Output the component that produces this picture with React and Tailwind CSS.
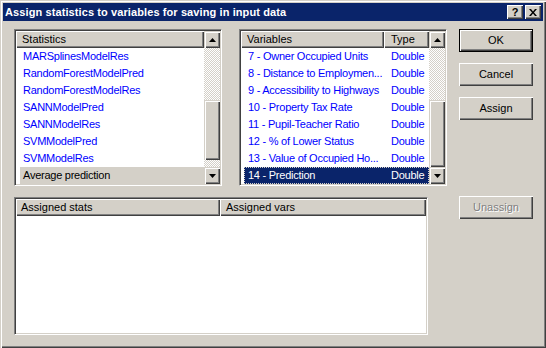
import React from "react";

const font = { fontFamily: '"Liberation Sans", Arial, sans-serif' };

function Arrow({ up }) {
  return (
    <svg width="7" height="4" viewBox="0 0 7 4" className="block">
      {up ? <polygon points="3.5,0 7,4 0,4" fill="#000" /> : <polygon points="0,0 7,0 3.5,4" fill="#000" />}
    </svg>
  );
}

function SBtn({ up }) {
  return (
    <div className="h-[17px] w-[16px] bg-[#d4d0c8] flex items-center justify-center shadow-[inset_1px_1px_#d4d0c8,inset_2px_2px_#fff,inset_-1px_-1px_#404040,inset_-2px_-2px_#808080]">
      <Arrow up={up} />
    </div>
  );
}

function Track({ h }) {
  return (
    <div
      className="w-[16px] bg-[repeating-conic-gradient(#d4d0c8_0_25%,#ffffff_0_50%)] bg-[length:2px_2px]"
      style={{ height: h }}
    />
  );
}

function Thumb({ h }) {
  return (
    <div
      className="w-[16px] bg-[#d4d0c8] shadow-[inset_1px_1px_#d4d0c8,inset_2px_2px_#fff,inset_-1px_-1px_#404040,inset_-2px_-2px_#808080]"
      style={{ height: h }}
    />
  );
}

function Header({ children, className = "" }) {
  return (
    <div className={"h-[17px] bg-[#d4d0c8] flex items-center text-[11px] text-black shadow-[inset_1px_1px_#fff,inset_-1px_-1px_#404040,inset_-2px_-2px_#808080] " + className}>
      {children}
    </div>
  );
}

function Sunken({ className = "", children }) {
  return (
    <div className={"border border-t-[#808080] border-l-[#808080] border-r-white border-b-white p-[1px] bg-white shadow-[inset_1px_1px_#404040,inset_-1px_-1px_#d4d0c8] " + className}>
      {children}
    </div>
  );
}

function Button({ children, def, disabled, className = "" }) {
  return (
    <div
      className={
        "w-[74px] h-[23px] bg-[#d4d0c8] flex items-center justify-center text-[11px] " +
        (def
          ? "border border-black shadow-[inset_1px_1px_#fff,inset_-1px_-1px_#404040,inset_-2px_-2px_#808080] "
          : "shadow-[inset_1px_1px_#fff,inset_-1px_-1px_#404040,inset_-2px_-2px_#808080] ") +
        (disabled ? "text-[#808080] [text-shadow:1px_1px_#fff] " : "text-black ") +
        className
      }
    >
      {children}
    </div>
  );
}

const stats = [
  "MARSplinesModelRes",
  "RandomForestModelPred",
  "RandomForestModelRes",
  "SANNModelPred",
  "SANNModelRes",
  "SVMModelPred",
  "SVMModelRes",
];

const vars = [
  "7 - Owner Occupied Units",
  "8 - Distance to Employmen...",
  "9 - Accessibility to Highways",
  "10 - Property Tax Rate",
  "11 - Pupil-Teacher Ratio",
  "12 - % of Lower Status",
  "13 - Value of Occupied Ho...",
];

export default function App() {
  return (
    <div
      style={font}
      className="w-[546px] h-[348px] bg-[#d4d0c8] p-[3px] flex flex-col shadow-[inset_1px_1px_#d4d0c8,inset_2px_2px_#fff,inset_-1px_-1px_#404040,inset_-2px_-2px_#808080] overflow-hidden select-none"
    >
      {/* Title bar */}
      <div className="h-[18px] bg-[#0a246a] flex items-center justify-between pl-[2px] pr-[2px]">
        <span className="text-white font-bold text-[11px] leading-none tracking-[0.1px]">
          Assign statistics to variables for saving in input data
        </span>
        <div className="flex gap-[2px]">
          <div className="w-[16px] h-[14px] bg-[#d4d0c8] flex items-center justify-center font-bold text-[11px] leading-none text-black shadow-[inset_1px_1px_#fff,inset_-1px_-1px_#404040,inset_-2px_-2px_#808080]">
            ?
          </div>
          <div className="w-[16px] h-[14px] bg-[#d4d0c8] flex items-center justify-center shadow-[inset_1px_1px_#fff,inset_-1px_-1px_#404040,inset_-2px_-2px_#808080]">
            <svg width="8" height="7" viewBox="0 0 8 7">
              <path d="M0 0h2l2 2.5L6 0h2L5 3.5 8 7H6L4 4.5 2 7H0l3-3.5z" fill="#000" />
            </svg>
          </div>
        </div>
      </div>

      {/* Body */}
      <div className="flex flex-col pl-[11px]">
        <div className="flex items-start mt-[8px]">
          {/* Statistics list */}
          <Sunken className="w-[208px] h-[157px]">
            <div className="flex">
              <div className="w-[188px] flex flex-col">
                <Header className="pl-[6px]">Statistics</Header>
                {stats.map((s) => (
                  <div key={s} className="h-[17px] flex items-center pl-[7px] text-[11px] tracking-[-0.25px] text-[#0000ff] whitespace-nowrap">
                    {s}
                  </div>
                ))}
                <div className="h-[17px] ml-[4px] pl-[3px] flex items-center text-[11px] tracking-[-0.25px] text-black bg-[#d4d0c8]">
                  Average prediction
                </div>
              </div>
              <div className="flex flex-col">
                <SBtn up />
                <Track h={52} />
                <Thumb h={60} />
                <Track h={7} />
                <SBtn />
              </div>
            </div>
          </Sunken>

          {/* Variables list */}
          <Sunken className="w-[208px] h-[157px] ml-[17px]">
            <div className="flex">
              <div className="w-[188px] flex flex-col">
                <div className="flex">
                  <Header className="w-[143px] pl-[6px]">Variables</Header>
                  <Header className="w-[45px] pl-[7px]">Type</Header>
                </div>
                {vars.map((v) => (
                  <div key={v} className="h-[17px] flex items-center text-[11px] tracking-[-0.25px] text-[#0000ff] whitespace-nowrap">
                    <span className="w-[143px] pl-[7px] overflow-hidden">{v}</span>
                    <span className="pl-[7px]">Double</span>
                  </div>
                ))}
                <div className="h-[17px] ml-[3px] flex items-center text-[11px] tracking-[-0.25px] text-white bg-[#0a246a] outline-1 outline-dotted outline-offset-[-1px] outline-[#d4d0c8]">
                  <span className="w-[140px] pl-[4px]">14 - Prediction</span>
                  <span className="pl-[7px]">Double</span>
                </div>
              </div>
              <div className="flex flex-col">
                <SBtn up />
                <Track h={52} />
                <Thumb h={67} />
                <SBtn />
              </div>
            </div>
          </Sunken>

          {/* Buttons */}
          <div className="flex flex-col ml-[12px] gap-[11px]">
            <Button def>OK</Button>
            <Button>Cancel</Button>
            <Button>Assign</Button>
          </div>
        </div>

        <div className="flex items-start">
          <Sunken className="w-[414px] h-[138px] mt-[11px]">
            <div className="flex">
              <Header className="w-[204px] h-[16px] pl-[5px]">Assigned stats</Header>
              <Header className="w-[206px] h-[16px] pl-[6px]">Assigned vars</Header>
            </div>
          </Sunken>
          <Button disabled className="ml-[31px] mt-[10px]">Unassign</Button>
        </div>
      </div>
    </div>
  );
}
